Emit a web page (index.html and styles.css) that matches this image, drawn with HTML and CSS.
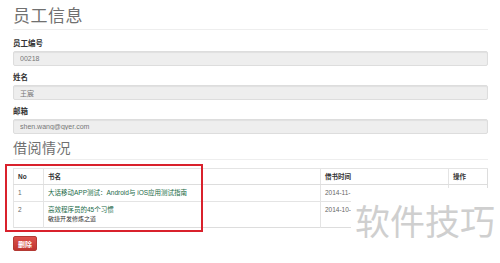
FILE: index.html
```html
<!DOCTYPE html>
<html lang="zh-CN">
<head>
  <meta charset="UTF-8" />
  <meta name="viewport" content="width=device-width, initial-scale=1.0"/>
  <title>员工信息</title>
  <link rel="stylesheet" href="styles.css">
</head>
<body>
<div class="page">
  <!-- Employee info -->
  <h1 class="title">员工信息</h1>
  <div class="field first">
    <label>员工编号</label>
    <input type="text" value="00218" disabled>
  </div>
  <div class="field">
    <label>姓名</label>
    <input type="text" value="王宸" disabled>
  </div>
  <div class="field">
    <label>邮箱</label>
    <input type="text" value="shen.wang@qyer.com" disabled>
  </div>

  <!-- Borrow records -->
  <h2 class="title sub">借阅情况</h2>
  <table class="records">
    <thead>
      <tr>
        <th class="col-no">No</th>
        <th class="col-name">书名</th>
        <th class="col-date">借书时间</th>
        <th class="col-op">操作</th>
      </tr>
    </thead>
    <tbody>
      <tr>
        <td>1</td>
        <td><a href="#">大话移动APP测试：Android与 iOS应用测试指南</a></td>
        <td>2014-11-</td>
        <td></td>
      </tr>
      <tr class="tall">
        <td>2</td>
        <td>
          <a href="#">高效程序员的45个习惯</a>
          <div class="subtitle">敏捷开发修炼之道</div>
        </td>
        <td>2014-10-</td>
        <td></td>
      </tr>
    </tbody>
  </table>

  <button class="btn-danger">删除</button>
</div>

<!-- overlays -->
<div class="highlight"></div>
<div class="watermark">软件技巧</div>
</body>
</html>
```
FILE: styles.css
```css
body {
  margin: 0;
  font-family: "Liberation Sans", Arial, "Noto Sans CJK SC", sans-serif;
  font-size: 7px;
  color: #333;
  background: #fff;
}

.page {
  padding: 0 12px 0 13px;
}

/* Headings */
.title {
  margin: 0;
  padding-top: 7px;
  height: 22px;
  font-size: 17px;
  line-height: 20px;
  font-weight: normal;
  color: #707070;
  letter-spacing: 0.5px;
  border-bottom: 1px solid #eee;
}
.title.sub {
  padding-top: 6px;
  height: 19px;
  font-size: 14px;
  line-height: 16px;
}

/* Form fields */
.field {
  display: flex;
  flex-direction: column;
}
.field label {
  font-size: 7.5px;
  font-weight: bold;
  line-height: 10px;
  margin: 7px 0 2px;
  color: #333;
}
.field.first label {
  margin-top: 9px;
}
.field input {
  height: 15px;
  box-sizing: border-box;
  padding: 0 6px;
  font-family: "Liberation Sans", Arial, "Noto Sans CJK SC", sans-serif;
  font-size: 7px;
  color: #777;
  background: #eee;
  border: 1px solid #ddd;
  border-radius: 2px;
  box-shadow: inset 0 1px 1px rgba(0, 0, 0, 0.06);
}

/* Table */
.records {
  margin-top: 8px;
  width: 100%;
  border-collapse: collapse;
  border: 1px solid #ddd;
}
.records th,
.records td {
  text-align: left;
  vertical-align: top;
  padding: 3px 4px 0;
  border-left: 1px solid #e4e4e4;
  border-top: 1px solid #e4e4e4;
  font-size: 6.5px;
  line-height: 9px;
}
.records th {
  height: 12px;
  font-weight: bold;
  color: #333;
  border-bottom: 1px solid #ddd;
}
.records td {
  height: 13px;
  color: #666;
}
.records tr.tall td {
  height: 22px;
}
.col-no { width: 21px; }
.col-date { width: 119px; }
.col-op { width: 30px; }
.records a {
  color: #1a6a47;
  text-decoration: none;
}
.subtitle {
  color: #333;
  font-size: 6px;
  line-height: 9px;
  margin-top: 1px;
}

/* Button */
.btn-danger {
  display: block;
  margin-top: 8px;
  width: 24px;
  height: 15px;
  padding: 0;
  font-family: "Liberation Sans", Arial, "Noto Sans CJK SC", sans-serif;
  font-size: 7px;
  font-weight: bold;
  color: #fff;
  background: linear-gradient(#dd514c, #c0352f);
  border: 1px solid #b33a34;
  border-radius: 2px;
}

/* Overlays */
.highlight {
  position: absolute;
  left: 5px;
  top: 164px;
  width: 194px;
  height: 64px;
  border: 2px solid #d9212c;
}
.watermark {
  position: absolute;
  left: 351px;
  top: 188px;
  width: 149px;
  height: 75px;
  background: #fff;
  box-sizing: border-box;
  padding: 12px 0 0 4px;
  font-family: "Noto Sans CJK SC", sans-serif;
  font-size: 35px;
  line-height: 40px;
  color: #cfcfcf;
  white-space: nowrap;
}
```
